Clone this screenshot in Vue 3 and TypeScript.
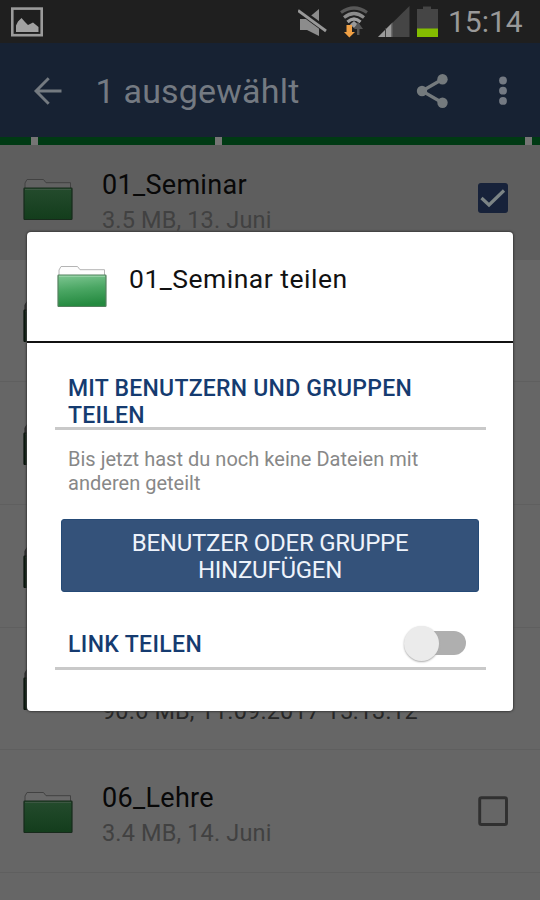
<script setup lang="ts">
interface FileRow {
  id: number
  name?: string
  meta?: string
  selected?: boolean
}

const rows: FileRow[] = [
  { id: 1, name: '01_Seminar', meta: '3.5 MB, 13. Juni', selected: true },
  { id: 2 },
  { id: 3 },
  { id: 4 },
  { id: 5, meta: '90.6 MB, 11.09.2017 15:13:12' },
  { id: 6, name: '06_Lehre', meta: '3.4 MB, 14. Juni' },
]
</script>

<template>
  <div class="screen">
    <header class="status">
      <svg class="picture" width="34" height="32" viewBox="0 0 34 32">
        <rect x="2.3" y="2.6" width="29.4" height="26.6" fill="none" stroke="#9b9b9b" stroke-width="2.6" />
        <path d="M6 26V19.500L8 15.500L11.500 12L15 16L18 19L23 16.500L28.500 21V26Z" fill="#a2a2a2" />
      </svg>
      <div class="status-right">
        <svg width="142" height="36" viewBox="0 0 142 36">
          <path d="M2 15H9L21 5V32L9 26H2Z" fill="#8c8c8c" />
          <path d="M0 5.500L28 26" stroke="#1f1f1f" stroke-width="6" />
          <path d="M0 6.500L28 27" stroke="#989898" stroke-width="2.800" />
          <g fill="none" stroke-width="3.200">
            <path d="M43 8.500Q56 -.5 69 8.500" stroke="#585858" />
            <path d="M46 13.500Q56 5.500 66 13.500" stroke="#8c8c8c" />
            <path d="M49.500 18Q56 12 62.500 18" stroke="#a0a0a0" />
          </g>
          <path d="M56 17L60 20.500L56 24L52 20.500Z" fill="#999" />
          <path d="M60 18L65 25H61.500V31H59V25H56Z" fill="#555" />
          <path d="M48.500 21H54V28H57L51.300 33.500L46 28H48.500Z" fill="#f0a044" />
          <path d="M80 33L111.500 2V33Z" fill="#454545" />
          <path d="M80 33L94.500 18.500V33Z" fill="#9a9a9a" />
          <path d="M87.500 24V33M94 19V33" stroke="#404040" />
          <path d="M119 5H125V2.500H133V5H140V33H119Z" fill="#454545" />
          <rect x="119" y="24.5" width="21" height="8.500" fill="#84bd00" />
        </svg>
        <span class="clock">15:14</span>
      </div>
    </header>

    <nav class="appbar">
      <svg class="back" width="30" height="30" viewBox="0 0 30 30" fill="none" stroke="#747a80" stroke-width="2.900">
        <path d="M28.500 15H3M15.700 2.200L3 15L15.700 27.800" />
      </svg>
      <h1 class="title">1 ausgewählt</h1>
      <svg class="share" width="34" height="36" viewBox="0 0 34 36">
        <path d="M26 6.500L6 18L26 29.500" fill="none" stroke="#747a7d" stroke-width="3.200" />
        <g fill="#747a7d">
          <circle cx="26.500" cy="6.300" r="5.200" />
          <circle cx="6" cy="18" r="5.200" />
          <circle cx="26.500" cy="29.700" r="5.200" />
        </g>
      </svg>
      <svg class="more" width="10" height="30" viewBox="0 0 10 30" fill="#747a83">
        <circle cx="5" cy="4.500" r="3.900" />
        <circle cx="5" cy="14.700" r="3.900" />
        <circle cx="5" cy="24.900" r="3.900" />
      </svg>
    </nav>

    <div class="progress"><i></i><i></i><i></i><i></i></div>

    <main class="list">
      <article v-for="row in rows" :key="row.id" class="row" :class="{ selected: row.selected }">
        <svg class="folder" :class="{ shaded: !row.name }" width="50" height="43" viewBox="0 0 50 43">
          <defs>
            <linearGradient id="row-green" x2="0" y2="1">
              <stop stop-color="#244b2d" />
              <stop offset="1" stop-color="#133d1c" />
            </linearGradient>
          </defs>
          <path d="M2 10V5L4 1.500H20.500L23 4.700H47.500V11" :fill="row.selected ? '#626262' : '#696969'" stroke="#424242" stroke-width="1" />
          <rect x="1" y="10" width="48" height="31.500" rx=".8" fill="url(#row-green)" stroke="#172a1b" stroke-width="1.200" />
          <path d="M2 11.500H48" stroke="#3c5742" />
        </svg>
        <div class="copy">
          <div class="name">{{ row.name }}</div>
          <div class="meta" :class="{ long: row.id === 5 }">{{ row.meta }}</div>
        </div>
        <svg class="check" width="32" height="32" viewBox="0 0 32 32">
          <g v-if="row.selected">
            <rect x="1" y="1" width="30" height="30" rx="3" fill="#17223a" />
            <path d="M4.500 16L12 23L27 8.500" fill="none" stroke="#7c8485" stroke-width="3.200" />
          </g>
          <rect v-else x="2.700" y="2.700" width="26.800" height="26.800" rx="1.800" fill="none" stroke="#303030" stroke-width="2.900" />
        </svg>
      </article>
    </main>

    <section class="dialog" role="dialog">
      <header class="dialog-head">
        <svg width="50" height="43" viewBox="0 0 50 43">
          <defs>
            <linearGradient id="dialog-green" x2=".15" y2="1">
              <stop stop-color="#7fc793" />
              <stop offset=".5" stop-color="#4aa663" />
              <stop offset="1" stop-color="#258a40" />
            </linearGradient>
          </defs>
          <path d="M2 10V5L4 1.500H20.500L23 4.700H47.500V11" fill="#fdfdfd" stroke="#b4b4b4" stroke-width="1" />
          <rect x="1" y="10" width="48" height="31.500" rx=".8" fill="url(#dialog-green)" stroke="#55805f" stroke-width="1.200" />
          <path d="M2 11.300H48" stroke="#9bd4aa" />
        </svg>
        <h2>01_Seminar teilen</h2>
      </header>
      <div class="dialog-body">
        <h3 class="users">MIT BENUTZERN UND GRUPPEN<br>TEILEN</h3>
        <p>Bis jetzt hast du noch keine Dateien mit<br>anderen geteilt</p>
        <button type="button">BENUTZER ODER GRUPPE<br>HINZUFÜGEN</button>
        <div class="link">
          <h3>LINK TEILEN</h3>
          <span class="switch"></span>
        </div>
      </div>
    </section>
  </div>
</template>

<style>
body {
  margin: 0;
  background: #666;
}
</style>

<style scoped>
.screen {
  position: relative;
  box-sizing: border-box;
  width: 540px;
  height: 900px;
  overflow: hidden;
  background: #666;
  font-family: Roboto, "Liberation Sans", sans-serif;
}

h1, h2, h3, p {
  margin: 0;
  font-weight: 400;
}

svg {
  display: block;
  flex: none;
}

.status {
  display: flex;
  justify-content: space-between;
  height: 43px;
  background: #1f1f1f;
}

.picture {
  margin: 6px 0 0 10px;
}

.status-right {
  display: flex;
  padding: 4px 16px 0 0;
}

.clock {
  width: 76px;
  margin-left: 8px;
  color: #999;
  font-size: 30px;
  line-height: 36px;
  letter-spacing: 0;
  white-space: nowrap;
}

.appbar {
  display: flex;
  align-items: center;
  box-sizing: border-box;
  height: 94px;
  padding: 1px 32px 0 33px;
  background: #172233;
}

.title {
  flex: 1;
  margin-left: 32.500px;
  color: #747a82;
  font-size: 34px;
  line-height: 40px;
  letter-spacing: .2px;
}

.share {
  margin-right: 48px;
}

.progress {
  position: relative;
  z-index: 1;
  display: grid;
  grid-template-columns: 31px 177px 303px 8px;
  gap: 7px;
  height: 7.500px;
  background: #757575;
}

.progress i {
  background: #003a14;
}

.list {
  margin-top: -7.500px;
}

.row {
  display: flex;
  box-sizing: border-box;
  height: 122.700px;
  padding: 0 31px 0 23px;
  border-bottom: 1px solid #5f5f5f;
}

.selected {
  background: #5e5e5e;
  border-bottom-color: #5e5e5e;
}

.folder {
  margin-top: 40.500px;
}

.folder.shaded {
  filter: brightness(.45);
}

.copy {
  flex: 1;
  padding: 31px 0 0 29px;
}

.name {
  height: 34px;
  color: #080808;
  font-size: 27px;
  line-height: 34px;
  letter-spacing: .3px;
}

.meta {
  color: #414141;
  font-size: 23.500px;
  line-height: 36px;
  letter-spacing: .15px;
  white-space: nowrap;
}

.meta.long {
  color: #272727;
}

.check {
  margin-top: 45px;
}

.dialog {
  position: absolute;
  top: 232px;
  left: 27px;
  width: 486px;
  height: 478.500px;
  background: #fff;
  border-radius: 4px;
  box-shadow: 0 0 2px 1px #3c3c3c;
}

.dialog-head {
  display: flex;
  box-sizing: border-box;
  height: 111px;
  padding: 33px 0 0 29.500px;
  border-bottom: 2px solid #111;
}

.dialog-head h2 {
  margin: -3px 0 0 22.500px;
  color: #111;
  font-size: 26.500px;
  line-height: 34px;
  letter-spacing: .5px;
}

.dialog-body {
  padding: 32px 27px 0 28px;
}

h3 {
  color: #153b70;
  font-size: 23px;
  font-weight: 500;
  line-height: 26.500px;
  letter-spacing: .25px;
}

.users {
  box-sizing: border-box;
  height: 55px;
  padding: 1px 0 0 13px;
  border-bottom: 3px solid #c9c9c9;
}

p {
  margin: 18px 0 0 13px;
  color: #888;
  font-size: 20px;
  line-height: 23.500px;
  letter-spacing: .02px;
  white-space: nowrap;
}

button {
  display: block;
  width: 418px;
  height: 73px;
  margin: 23.500px 0 0 6px;
  padding: 4px 0 0;
  color: #eef3fb;
  background: #34527a;
  border: 1px solid #254a76;
  border-radius: 3px;
  font: 400 24px/27px Roboto, "Liberation Sans", sans-serif;
  letter-spacing: -.25px;
}

.link {
  display: flex;
  align-items: center;
  justify-content: space-between;
  box-sizing: border-box;
  height: 54px;
  margin-top: 24px;
  padding: 0 20px 0 13px;
  border-bottom: 3px solid #c9c9c9;
}

.link h3 {
  padding-top: 8px;
  letter-spacing: .35px;
}

.switch {
  display: flex;
  align-items: center;
  width: 53px;
  height: 24px;
  margin-top: 4px;
  background: #afafaf;
  border-radius: 12px;
}

.switch::before {
  width: 35px;
  height: 35px;
  margin-left: -9.500px;
  background: #ebebeb;
  border-radius: 50%;
  box-shadow: 0 1px 2px #aaa;
  content: "";
}
</style>
